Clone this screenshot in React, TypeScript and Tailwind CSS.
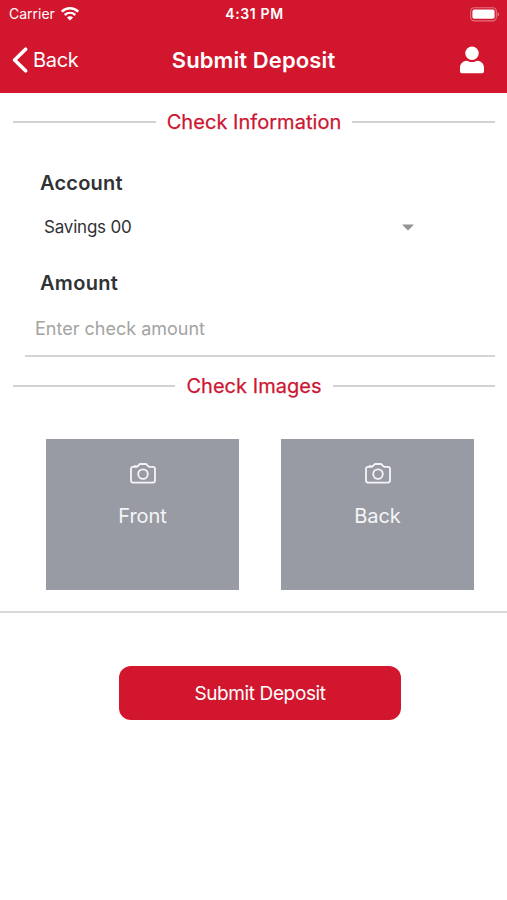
import { useState } from 'react';

const sides = [
  { id: 'front', title: 'Front' },
  { id: 'back', title: 'Back' },
];

function WifiIcon() {
  return (
    <svg width="18" height="14" viewBox="0 0 18 14" fill="none" stroke="#fff">
      <path d="M0.8 4.7C5.4 0.2 12.6 0.2 17.2 4.7" strokeWidth="2.5" />
      <path d="M3.7 8C6.8 5.1 11.2 5.1 14.3 8" strokeWidth="2.4" />
      <path d="M9 13.6L5.9 10.4C7.7 8.8 10.3 8.8 12.1 10.4Z" fill="#fff" stroke="none" />
    </svg>
  );
}

function BatteryIcon() {
  return (
    <svg width="30" height="15" viewBox="0 0 30 15" fill="none">
      <rect x="0.7" y="0.7" width="25.6" height="13.2" rx="3.6" stroke="#fff" strokeOpacity="0.4" strokeWidth="1.1" />
      <rect x="2.4" y="2.6" width="22.2" height="9.2" rx="1.8" fill="#fff" />
      <path d="M27.6 5.2C29.4 5.9 29.4 8.7 27.6 9.4Z" fill="#fff" fillOpacity="0.5" />
    </svg>
  );
}

function CameraIcon() {
  return (
    <svg width="26" height="21" viewBox="0 0 26 21" fill="none" stroke="#f4f5f7" strokeWidth="1.8" strokeLinejoin="round" strokeLinecap="round">
      <path d="M3 3.8H6.4C7.3 3.8 7.9 3.4 8.4 2.6C8.9 1.6 9.4 1 10.4 1H15.6C16.6 1 17.1 1.6 17.6 2.6C18.1 3.4 18.7 3.8 19.6 3.8H23C24.3 3.8 25 4.6 25 5.8V17.6C25 18.9 24.3 19.6 23 19.6H3C1.7 19.6 1 18.9 1 17.6V5.8C1 4.6 1.7 3.8 3 3.8Z" />
      <path d="M4.4 3.2H6" />
      <circle cx="13" cy="11.1" r="4.8" />
    </svg>
  );
}

function SectionTitle({ title }: { title: string }) {
  return (
    <div className="flex h-[58px] items-center pl-[13px] pr-3">
      <div className="h-[2px] flex-1 bg-[#d0d2d4]"></div>
      <h2 className="px-[11px] text-[20px] leading-7 tracking-[0.002em] text-[#cc1632] [-webkit-text-stroke:0.25px]">{title}</h2>
      <div className="h-[2px] flex-1 bg-[#d0d2d4]"></div>
    </div>
  );
}

export default function App() {
  const [amount, setAmount] = useState('');

  return (
    <div className="min-h-[900px] w-full bg-white font-['Inter',sans-serif] text-[#303235]">
      {/* HEADER */}
      <header className="h-[93px] bg-[#d1162d] text-white">
        <div className="grid h-7 grid-cols-3 items-center pl-[9px] pr-[7px]">
          <div className="flex items-center gap-1.5">
            <span className="text-[14px] leading-5">Carrier</span>
            <WifiIcon />
          </div>
          <span className="text-center text-[14px] font-semibold leading-5 tracking-[0.045em]">4:31 PM</span>
          <div className="flex justify-end">
            <BatteryIcon />
          </div>
        </div>

        <div className="grid h-[63px] grid-cols-[1fr_auto_1fr] items-center px-3">
          <button className="flex items-center gap-[5px]">
            <svg width="16" height="26" viewBox="0 0 16 26" fill="none" stroke="#fff" strokeWidth="3.6" strokeLinecap="round" strokeLinejoin="round">
              <path d="M13.6 2.2L2.6 13L13.6 23.8" />
            </svg>
            <span className="text-[20px] leading-7 tracking-[-0.015em]">Back</span>
          </button>
          <h1 className="text-[22px] font-semibold leading-7 tracking-[0.005em]">Submit Deposit</h1>
          <div className="mr-[11px] flex justify-end">
            <svg width="24" height="28" viewBox="0 0 24 28" fill="#fff">
              <circle cx="12" cy="7.3" r="6.7" />
              <path d="M7 14.7C8.5 15.6 10.2 16 12 16C13.8 16 15.5 15.6 17 14.7C21 14.7 24 17.6 24 21.6V24.9C24 26.5 23.2 27.3 21.6 27.3H2.4C0.8 27.3 0 26.5 0 24.9V21.6C0 17.6 3 14.7 7 14.7Z" />
            </svg>
          </div>
        </div>
      </header>

      {/* CHECK INFORMATION */}
      <SectionTitle title="Check Information" />
      <div className="pl-[25px] pr-3">
        <h3 className="mt-[18px] pl-[15px] text-[20px] font-semibold leading-7 tracking-[0.01em]">Account</h3>
        <button className="mt-4 flex h-7 w-[389px] items-center justify-between pl-[19px] text-[17px] tracking-[-0.012em]">
          <span className="pt-0.5">Savings 00</span>
          <svg width="12" height="7" viewBox="0 0 12 7" fill="#929292">
            <path d="M0 0.5H12L6 6.5Z" />
          </svg>
        </button>
        <h3 className="mt-7 pl-[15px] text-[20px] font-semibold leading-7 tracking-[0.015em]">Amount</h3>
        <input
          value={amount}
          onChange={(e) => setAmount(e.target.value)}
          placeholder="Enter check amount"
          className="mt-[3px] block h-[57px] w-full border-b-2 border-[#d2d4d6] pl-[10px] pt-px text-[18px] outline-none placeholder:text-[#a3a3a3]"
        />
      </div>

      {/* CHECK IMAGES */}
      <SectionTitle title="Check Images" />
      <div className="flex justify-between border-b-2 border-[#d9d9d9] pb-[21px] pl-[46px] pr-[33px] pt-6">
        {sides.map((side) => (
          <button key={side.id} className="flex h-[151px] w-[193px] flex-col items-center bg-[#989ba3] pt-[24px] text-[#f4f5f7]">
            <CameraIcon />
            <span className="mt-[18px] text-[20px] leading-7 tracking-[-0.005em]">{side.title}</span>
          </button>
        ))}
      </div>

      <button className="ml-[119px] mt-[53px] block h-[54px] w-[282px] rounded-[12px] bg-[#d1162d] pt-[3px] text-[19px] tracking-[-0.02em] text-white">
        Submit Deposit
      </button>
    </div>
  );
}
